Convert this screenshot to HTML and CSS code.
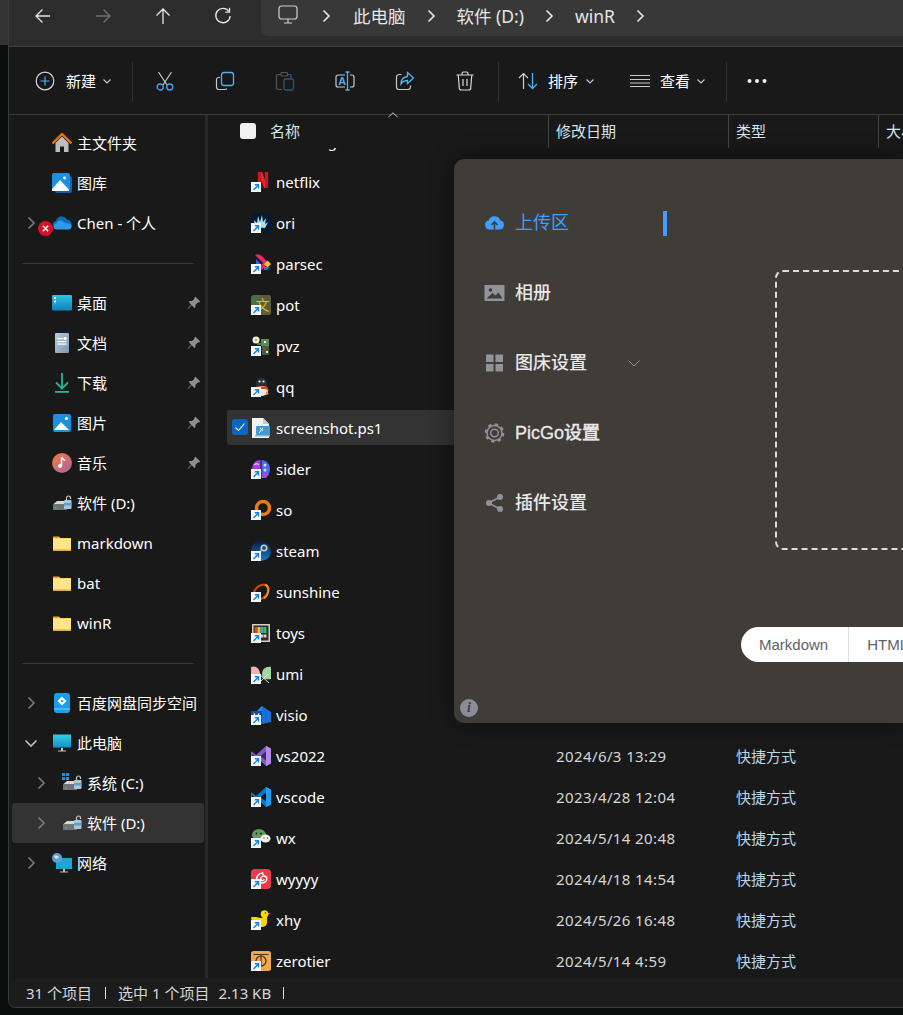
FILE: index.html
```html
<!DOCTYPE html>
<html lang="zh-CN">
<head>
<meta charset="utf-8">
<title>winR - 文件资源管理器</title>
<link rel="stylesheet" href="styles.css">
</head>
<body>
<svg class="defs" width="0" height="0" aria-hidden="true">
  <defs>
    <symbol id="chev" viewBox="0 0 16 16"><path d="M5.500 2.500 11 8l-5.500 5.500" fill="none" stroke="currentColor" stroke-width="1.600"/></symbol>
    <symbol id="chevd" viewBox="0 0 10 10"><path d="M1.500 3.500 5 7l3.500-3.500" fill="none" stroke="currentColor" stroke-width="1.200"/></symbol>
    <symbol id="pin" viewBox="0 0 14 14"><path d="M8.500.8 13.200 5.500 11.900 6.600 10.800 6.400 8.500 8.700 8.500 11 7.400 12 4.700 9.300 1.300 12.800.8 12.300 4.200 8.800 1.700 6.100 2.800 5 5.100 5 7.400 2.800 7.300 1.800Z" fill="#8b9096"/></symbol>
    <symbol id="sc" viewBox="0 0 10 10"><rect width="10" height="10" fill="#f4f6f8"/><path d="M2.500 8 7.200 3.200M3.800 2.800H7.500V6.500" fill="none" stroke="#1484e0" stroke-width="1.400"/></symbol>
    <symbol id="folder" viewBox="0 0 20 20"><path d="M1 3.500h6l2 2h-8z" fill="#f0a818"/><rect x="1" y="5" width="18" height="12.500" fill="#ffd75e"/><rect x="1" y="6" width="18" height="11.500" fill="#ffe48a"/><rect x="1" y="16.500" width="18" height="1" fill="#e8a820"/></symbol>
    <symbol id="drive" viewBox="0 0 20 20"><path d="M1 11.500 5 8h10v3.500z" fill="#d8d8d8"/><rect x="1" y="11.500" width="14" height="5.500" fill="#6f7276"/><rect x="3" y="14" width="1.500" height="1.500" fill="#34d058"/><path d="M14.500 8V5a2 2 0 0 1 4 0v1" fill="none" stroke="#c9ccd0" stroke-width="1.200"/><rect x="12" y="7" width="7.500" height="9" rx="1" fill="#b6c4d0"/><rect x="12" y="10" width="7.500" height="2.500" fill="#4aa3dc"/></symbol>
    <symbol id="mount" viewBox="0 0 20 20"><rect x="1" y="1" width="18" height="18" rx="2" fill="#1b8fe0"/><path d="M2 17 9 9l8 8z" fill="#fff"/><circle cx="14.500" cy="5.500" r="1.600" fill="#fff"/></symbol>
  </defs>
</svg>

<div class="gutter"><div class="gutter-top"></div></div>

<div class="window">
  <header class="navbar">
    <div class="nav-buttons">
      <svg class="nb" viewBox="0 0 20 20"><path d="M17 10H3M9.500 3.500 3 10l6.500 6.500" fill="none" stroke="#e8e8e8" stroke-width="1.300"/></svg>
      <svg class="nb" viewBox="0 0 20 20"><path d="M3 10h14M10.500 3.500 17 10l-6.500 6.500" fill="none" stroke="#6e6e6e" stroke-width="1.300"/></svg>
      <svg class="nb" viewBox="0 0 20 20"><path d="M10 18V3M3.500 9.500 10 3l6.500 6.500" fill="none" stroke="#e8e8e8" stroke-width="1.300"/></svg>
      <svg class="nb" viewBox="0 0 20 20"><path d="M16 5.500A7.200 7.200 0 1 0 17.200 10" fill="none" stroke="#e8e8e8" stroke-width="1.300"/><path d="M16.500 1.800v4.300h-4.300" fill="none" stroke="#e8e8e8" stroke-width="1.300"/></svg>
    </div>
    <nav class="crumbs">
      <svg class="crumb-pc" viewBox="0 0 20 20"><rect x="1" y="1" width="18" height="13" rx="2.500" fill="none" stroke="#cfcfcf" stroke-width="1.200"/><path d="M10 14v3.500M6 18h8" fill="none" stroke="#cfcfcf" stroke-width="1.200"/></svg>
      <svg class="crumb-sep" viewBox="0 0 16 16"><use href="#chev"/></svg>
      <span class="crumb">此电脑</span>
      <svg class="crumb-sep" viewBox="0 0 16 16"><use href="#chev"/></svg>
      <span class="crumb">软件 (D:)</span>
      <svg class="crumb-sep" viewBox="0 0 16 16"><use href="#chev"/></svg>
      <span class="crumb">winR</span>
      <svg class="crumb-sep" viewBox="0 0 16 16"><use href="#chev"/></svg>
    </nav>
  </header>

  <div class="toolbar">
    <div class="tb-new">
      <svg class="ti" viewBox="0 0 20 20"><circle cx="10" cy="10" r="8.800" fill="none" stroke="#d8d8d8" stroke-width="1.200"/><path d="M10 5.500v9M5.500 10h9" stroke="#4cb4f0" stroke-width="1.200"/></svg>
      <span class="tb-label">新建</span>
      <svg class="tb-chev" viewBox="0 0 10 10"><use href="#chevd"/></svg>
    </div>
    <span class="tb-sep"></span>
    <div class="tb-icons">
      <span class="tb-btn"><svg class="ti" viewBox="0 0 20 20"><path d="M3.500 1 12 14M16.500 1 8 14" fill="none" stroke="#cfcfcf" stroke-width="1.100"/><circle cx="5.200" cy="16" r="3" fill="none" stroke="#3fa9e0" stroke-width="1.300"/><circle cx="14.800" cy="16" r="3" fill="none" stroke="#3fa9e0" stroke-width="1.300"/></svg></span>
      <span class="tb-btn"><svg class="ti" viewBox="0 0 20 20"><path d="M5 6.500H3.500A2 2 0 0 0 1.500 8.500v7.500a2.500 2.500 0 0 0 2.500 2.500h6a2.500 2.500 0 0 0 2-1" fill="none" stroke="#c8c8c8" stroke-width="1.200"/><rect x="6.500" y="1.500" width="12" height="13" rx="2.500" fill="none" stroke="#4cb4f0" stroke-width="1.300"/></svg></span>
      <span class="tb-btn"><svg class="ti" viewBox="0 0 20 20"><path d="M5.500 3.500H3A1.500 1.500 0 0 0 1.500 5v12A1.500 1.500 0 0 0 3 18.500h4M13 3.500h1.500A1.500 1.500 0 0 1 16 5v2.500" fill="none" stroke="#555" stroke-width="1.200"/><rect x="6" y="1.500" width="6.500" height="3.500" rx="1" fill="none" stroke="#555" stroke-width="1.200"/><rect x="9" y="8" width="9.500" height="11" rx="1.800" fill="none" stroke="#275a78" stroke-width="1.300"/></svg></span>
      <span class="tb-btn"><svg class="ti" viewBox="0 0 20 20"><path d="M10 4H3A2 2 0 0 0 1 6v8a2 2 0 0 0 2 2h7M15 4h2a2 2 0 0 1 2 2v8a2 2 0 0 1-2 2h-2" fill="none" stroke="#c8c8c8" stroke-width="1.200"/><text class="ti-a" x="3.500" y="14">A</text><path d="M12.500 1v18M10.500 1h4M10.500 19h4" fill="none" stroke="#4cb4f0" stroke-width="1.300"/></svg></span>
      <span class="tb-btn"><svg class="ti" viewBox="0 0 20 20"><path d="M6.500 3.500H4A2.500 2.500 0 0 0 1.500 6v10A2.500 2.500 0 0 0 4 18.500h9a2.500 2.500 0 0 0 2.500-2.500v-1.500" fill="none" stroke="#c8c8c8" stroke-width="1.200"/><path d="M12.500 1.500 18.500 7l-6 5.500V9.500c-3 0-5 1-6.500 3.500 0-4.500 2.500-7 6.500-7.500z" fill="none" stroke="#4cb4f0" stroke-width="1.300"/></svg></span>
      <span class="tb-btn"><svg class="ti" viewBox="0 0 20 20"><path d="M1.500 4h17M7 4V2.500A1.500 1.500 0 0 1 8.500 1h3A1.500 1.500 0 0 1 13 2.500V4M3.200 4l1.100 13a2 2 0 0 0 2 2h7.400a2 2 0 0 0 2-2L16.800 4M8 8v7M12 8v7" fill="none" stroke="#d8d8d8" stroke-width="1.200"/></svg></span>
    </div>
    <span class="tb-sep tb-sep-b"></span>
    <div class="tb-sort">
      <svg class="ti" viewBox="0 0 20 20"><path d="M5.500 18V2.500M1 7l4.500-4.500L10 7" fill="none" stroke="#d0d0d0" stroke-width="1.200"/><path d="M14.500 2v15.500M10 13l4.500 4.500L19 13" fill="none" stroke="#4cb4f0" stroke-width="1.300"/></svg>
      <span class="tb-label">排序</span>
      <svg class="tb-chev" viewBox="0 0 10 10"><use href="#chevd"/></svg>
    </div>
    <div class="tb-view">
      <svg class="ti" viewBox="0 0 20 20"><path d="M0 4.500h20M0 8.500h20M0 12h20M0 15.500h20" fill="none" stroke="#c8c8c8" stroke-width="1.100"/></svg>
      <span class="tb-label">查看</span>
      <svg class="tb-chev" viewBox="0 0 10 10"><use href="#chevd"/></svg>
    </div>
    <span class="tb-sep tb-sep-c"></span>
    <svg class="tb-dots" viewBox="0 0 20 6"><circle cx="2.500" cy="3" r="2" fill="#f0f0f0"/><circle cx="10" cy="3" r="2" fill="#f0f0f0"/><circle cx="17.500" cy="3" r="2" fill="#f0f0f0"/></svg>
  </div>

  <div class="main">
    <aside class="sidebar">
      <div class="side-row"><svg class="icon" viewBox="0 0 20 20"><path d="M3.500 10v9h4.500v-5.500h4V19h4.500v-9L10 3.500z" fill="#bdbdbd"/><path d="M0.500 10.500 10 1l9.500 9.500" fill="none" stroke="#e8730c" stroke-width="2.400"/></svg><span>主文件夹</span></div>
      <div class="side-row"><svg class="icon" viewBox="0 0 20 20"><rect x="3" y="3" width="17" height="17" rx="2" fill="#0f62ad"/><rect width="18" height="18" rx="2" fill="#1b8fe0"/><path d="M0 16 8 7l9 9.500V18H0z" fill="#f4faff"/><circle cx="12.500" cy="5" r="1.400" fill="#fff"/></svg><span>图库</span></div>
      <div class="side-row has-chev">
        <svg class="chev" viewBox="0 0 16 16"><use href="#chev"/></svg>
        <svg class="icon" viewBox="0 0 20 20"><path d="M4.500 15.500A3.800 3.800 0 0 1 4 8a5.800 5.800 0 0 1 10.800-1.500A4.700 4.700 0 0 1 19.500 11.500l-.5 4z" fill="#0f6cbd"/><path d="M5 16.500a3 3 0 0 1-.5-6 4 4 0 0 1 7-1.500l4 1.500a3 3 0 0 1 4 2.500 3 3 0 0 1-2.500 3.500z" fill="#2a9be8"/></svg>
        <span>Chen - 个人</span>
        <span class="err-badge"><svg viewBox="0 0 14 14"><circle cx="7" cy="7" r="7" fill="#d8102c"/><path d="M4.500 4.500l5 5M9.500 4.500l-5 5" stroke="#fff" stroke-width="1.400"/></svg></span>
      </div>
      <div class="side-div"></div>
      <div class="side-row"><svg class="icon" viewBox="0 0 20 20"><defs><linearGradient id="gd" x1="0" y1="0" x2="0" y2="1"><stop offset="0" stop-color="#2cc3e6"/><stop offset="1" stop-color="#1280b8"/></linearGradient></defs><rect y="2" width="20" height="15.500" rx="1" fill="url(#gd)"/><rect x="2" y="4" width="2" height="2" fill="#fff"/><rect x="2" y="7.500" width="2" height="2" fill="#fff"/></svg><span>桌面</span><svg class="pin" viewBox="0 0 14 14"><use href="#pin"/></svg></div>
      <div class="side-row"><svg class="icon" viewBox="0 0 20 20"><defs><linearGradient id="gdoc" x1="0" y1="0" x2="1" y2="1"><stop offset="0" stop-color="#b9cde0"/><stop offset="1" stop-color="#7c95b0"/></linearGradient></defs><rect x="3" width="14" height="20" rx="1" fill="url(#gdoc)"/><rect x="5.500" y="5" width="6" height="1.200" fill="#fff"/><rect x="5.500" y="8" width="9" height="1.200" fill="#fff"/><rect x="5.500" y="10.500" width="9" height="1.200" fill="#fff"/><rect x="12" y="4" width="2.500" height="3" fill="#fff"/></svg><span>文档</span><svg class="pin" viewBox="0 0 14 14"><use href="#pin"/></svg></div>
      <div class="side-row"><svg class="icon" viewBox="0 0 20 20"><path d="M10 0v15M4 9.500l6 6 6-6" fill="none" stroke="#1fb89a" stroke-width="1.800"/><rect x="3" y="18" width="14" height="1.800" fill="#1fb89a"/></svg><span>下载</span><svg class="pin" viewBox="0 0 14 14"><use href="#pin"/></svg></div>
      <div class="side-row"><svg class="icon" viewBox="0 0 20 20"><use href="#mount"/></svg><span>图片</span><svg class="pin" viewBox="0 0 14 14"><use href="#pin"/></svg></div>
      <div class="side-row"><svg class="icon" viewBox="0 0 20 20"><defs><linearGradient id="gm" x1="0" y1="0" x2="1" y2="1"><stop offset="0" stop-color="#ee7d3c"/><stop offset="1" stop-color="#b35fa8"/></linearGradient></defs><circle cx="10" cy="10" r="10" fill="url(#gm)"/><path d="M9.500 4.500v8" stroke="#fff" stroke-width="1.500"/><path d="M9.500 4.500c1 1.500 3 1.500 3 3.500" fill="none" stroke="#fff" stroke-width="1.500"/><circle cx="8" cy="13" r="2" fill="#fff"/></svg><span>音乐</span><svg class="pin" viewBox="0 0 14 14"><use href="#pin"/></svg></div>
      <div class="side-row"><svg class="icon" viewBox="0 0 20 20"><use href="#drive"/></svg><span>软件 (D:)</span></div>
      <div class="side-row"><svg class="icon" viewBox="0 0 20 20"><use href="#folder"/></svg><span>markdown</span></div>
      <div class="side-row"><svg class="icon" viewBox="0 0 20 20"><use href="#folder"/></svg><span>bat</span></div>
      <div class="side-row"><svg class="icon" viewBox="0 0 20 20"><use href="#folder"/></svg><span>winR</span></div>
      <div class="side-div"></div>
      <div class="side-row has-chev"><svg class="chev" viewBox="0 0 16 16"><use href="#chev"/></svg><svg class="icon" viewBox="0 0 20 20"><rect x="2" width="16" height="20" rx="3" fill="#1a9ee8"/><rect x="2" y="15.500" width="16" height="1" fill="#7fd0f8"/><path d="M10 3.500 14.500 8 10 12.500 5.500 8z" fill="#fff"/><path d="M10 6.500 11.500 8 10 9.500 8.500 8z" fill="#1a9ee8"/></svg><span>百度网盘同步空间</span></div>
      <div class="side-row has-chev"><svg class="chev chev-open" viewBox="0 0 16 16"><path d="M2.500 5.500 8 11l5.500-5.500" fill="none" stroke="currentColor" stroke-width="1.700"/></svg><svg class="icon" viewBox="0 0 20 20"><defs><linearGradient id="gpc" x1="0" y1="0" x2="0" y2="1"><stop offset="0" stop-color="#2fd0e6"/><stop offset="1" stop-color="#1590c4"/></linearGradient></defs><rect y="1.500" width="18" height="13" fill="url(#gpc)" transform="translate(1 0)"/><rect x="1" y="14" width="18" height="1" fill="#0e5a80"/><path d="M9 15h2v2.500H9zM6 17.500h8v1H6z" fill="#c0c8d0"/></svg><span>此电脑</span></div>
      <div class="side-row has-chev deep"><svg class="chev" viewBox="0 0 16 16"><use href="#chev"/></svg><svg class="icon" viewBox="0 0 20 20"><use href="#drive"/><path d="M0 0h3v3H0zM4 0h3v3H4zM0 4h3v3H0zM4 4h3v3H4z" fill="#1b8fe0"/></svg><span>系统 (C:)</span></div>
      <div class="side-row has-chev deep selected"><svg class="chev" viewBox="0 0 16 16"><use href="#chev"/></svg><svg class="icon" viewBox="0 0 20 20"><use href="#drive"/></svg><span>软件 (D:)</span></div>
      <div class="side-row has-chev"><svg class="chev" viewBox="0 0 16 16"><use href="#chev"/></svg><svg class="icon" viewBox="0 0 20 20"><rect x="4" y="5" width="16" height="11" fill="#1ca6d8"/><path d="M11 16h2v2.500h-2zM8 18.500h8v1H8z" fill="#b8c0c8"/><circle cx="5" cy="5" r="5" fill="#5d9fd0"/><path d="M2 3c2-1 4 0 5 1-1 2-3 2-4 1z" fill="#cfe6f5"/></svg><span>网络</span></div>
    </aside>
    <div class="side-rule"></div>

    <section class="content">
      <div class="col-head">
        <span class="head-check"></span>
        <span class="head-name">名称<svg class="sort-caret" viewBox="0 0 10 6"><path d="M.5 5 5 .8 9.500 5" fill="none" stroke="#c8c8c8" stroke-width="1"/></svg></span>
        <span class="head-col head-date">修改日期</span>
        <span class="head-col head-type">类型</span>
        <span class="head-col head-size">大小</span>
      </div>
      <div class="list-clip">
        <div class="list">
          <div class="row"><span class="fi"><svg viewBox="0 0 20 20"><path d="M1 0h15l3 1.500H1z" fill="#f0f0f0"/></svg></span><span class="name">morning</span><span class="date">2024/5/14 20:48</span></div>
          <div class="row"><span class="fi"><svg viewBox="0 0 20 20"><rect x="6" width="12" height="16" fill="#2a2020"/><path d="M7 0h4l6 16h-4z" fill="#e8262c"/><path d="M7 0h3v15H7zM14 0h3v16h-3z" fill="#c81820"/></svg><svg class="sc" viewBox="0 0 10 10"><use href="#sc"/></svg></span><span class="name">netflix</span><span class="date">2024/5/14 20:48</span><span class="type">快捷方式</span></div>
          <div class="row"><span class="fi"><svg viewBox="0 0 20 20"><rect width="20" height="20" fill="#07192e"/><path d="M4 14 3 7l3 3 1-7 2 6 2-7 1 7 3-4-1 6 3-2-3 6z" fill="#a8e0f4"/></svg><svg class="sc" viewBox="0 0 10 10"><use href="#sc"/></svg></span><span class="name">ori</span><span class="date">2024/5/14 20:48</span><span class="type">快捷方式</span></div>
          <div class="row"><span class="fi"><svg viewBox="0 0 20 20"><path d="M4 1C7-1 10 1 12 3l5 6-6 7-3-3 4-4-6-6z" fill="#e9246c"/><path d="M5 5l5 5-5 5z" fill="#1e6ae0"/><path d="M13 10 16.500 6.500 20 10l-3.500 3.500z" fill="#f5c518"/><path d="M13 13h6l-3 3h-3z" fill="#2a70d8"/></svg><svg class="sc" viewBox="0 0 10 10"><use href="#sc"/></svg></span><span class="name">parsec</span><span class="date">2024/5/14 20:48</span><span class="type">快捷方式</span></div>
          <div class="row"><span class="fi"><svg viewBox="0 0 20 20"><rect width="20" height="20" rx="3" fill="#4f6a4a"/><path d="M9 0h8a3 3 0 0 1 3 3v14a3 3 0 0 1-3 3H9z" fill="#5e5c36"/><text class="pot-glyph" x="4.500" y="15">文</text></svg><svg class="sc" viewBox="0 0 10 10"><use href="#sc"/></svg></span><span class="name">pot</span><span class="date">2024/5/14 20:48</span><span class="type">快捷方式</span></div>
          <div class="row"><span class="fi"><svg viewBox="0 0 20 20"><circle cx="5" cy="4" r="3.500" fill="#f4f4e8"/><circle cx="5" cy="4" r="1.300" fill="#d8a820"/><rect x="10" y="3" width="8" height="7" fill="#5c8a5c"/><rect x="11" y="10" width="7" height="9" fill="#3e5e40"/><rect x="13" y="5" width="2" height="2" fill="#e8e8e8"/><rect x="12" y="12" width="2" height="2" fill="#c83030"/><rect x="15" y="15" width="2" height="2" fill="#e8e8e8"/><rect x="6" y="7" width="5" height="2" fill="#3a8a3a"/></svg><svg class="sc" viewBox="0 0 10 10"><use href="#sc"/></svg></span><span class="name">pvz</span><span class="date">2024/5/14 20:48</span><span class="type">快捷方式</span></div>
          <div class="row"><span class="fi"><svg viewBox="0 0 20 20"><ellipse cx="10.500" cy="7" rx="5.500" ry="6.500" fill="#2a3038"/><ellipse cx="11" cy="14" rx="6" ry="5" fill="#e8e8e8"/><path d="M5 9.500h11l2 4-4-1.500H6z" fill="#e8401c"/><path d="M15 14l3 3-3 1z" fill="#e8a018"/><circle cx="8.500" cy="4.500" r="1.100" fill="#eee"/><circle cx="12.500" cy="4.500" r="1.100" fill="#eee"/></svg><svg class="sc" viewBox="0 0 10 10"><use href="#sc"/></svg></span><span class="name">qq</span><span class="date">2024/5/14 20:48</span><span class="type">快捷方式</span></div>
          <div class="row is-selected"><span class="row-check"><svg viewBox="0 0 16 16"><path d="M3.500 8.500 6.500 11.500 12.500 4.500" fill="none" stroke="#fff" stroke-width="1.100"/></svg></span><span class="fi"><svg viewBox="0 0 20 20"><path d="M1 0h11l6 6v14H1z" fill="#f2f2f2"/><path d="M12 0v6h6z" fill="#c8c8c8"/><rect x="5" y="8" width="14" height="9" rx="1" fill="#3e9ad2"/><path d="M8 15 12 10M9 10l3 2.500" stroke="#fff" stroke-width="1"/><rect x="4" y="17" width="15" height="1.500" fill="#9ab4c8"/></svg></span><span class="name">screenshot.ps1</span><span class="date">2024/5/14 20:48</span><span class="type">PS1 文件</span></div>
          <div class="row"><span class="fi"><svg viewBox="0 0 20 20"><path d="M9.500 1C4 1 1 5 1 10s3 9 8.500 9z" fill="#a83ce0"/><path d="M10.500 1c5 0 8.500 4 8.500 9s-3 9-8.500 9z" fill="#4a6ae8"/><circle cx="14" cy="6" r="1.500" fill="#d8e0ff"/><circle cx="14" cy="11" r="1.500" fill="#d8e0ff"/><path d="M3 6c2-2 4-1 5 0" stroke="#e8a8ff" stroke-width="1.200" fill="none"/><path d="M13 15h5l-3 4h-4z" fill="#c83cc8"/></svg><svg class="sc" viewBox="0 0 10 10"><use href="#sc"/></svg></span><span class="name">sider</span><span class="date">2024/5/14 20:48</span><span class="type">快捷方式</span></div>
          <div class="row"><span class="fi"><svg viewBox="0 0 20 20"><circle cx="12" cy="8" r="6.500" fill="none" stroke="#ee7a10" stroke-width="3.400"/></svg><svg class="sc" viewBox="0 0 10 10"><use href="#sc"/></svg></span><span class="name">so</span><span class="date">2024/5/14 20:48</span><span class="type">快捷方式</span></div>
          <div class="row"><span class="fi"><svg viewBox="0 0 20 20"><defs><linearGradient id="gs" x1="0" y1="0" x2="0" y2="1"><stop offset="0" stop-color="#0c1a44"/><stop offset="1" stop-color="#1480c0"/></linearGradient></defs><circle cx="10" cy="10" r="10" fill="url(#gs)"/><circle cx="13" cy="7" r="3.500" fill="#c8d4e0"/><circle cx="13" cy="7" r="2" fill="#264a78"/><path d="M10 10 4 14" stroke="#e8eef4" stroke-width="2"/></svg><svg class="sc" viewBox="0 0 10 10"><use href="#sc"/></svg></span><span class="name">steam</span><span class="date">2024/5/14 20:48</span><span class="type">快捷方式</span></div>
          <div class="row"><span class="fi"><svg viewBox="0 0 20 20"><ellipse cx="10" cy="10" rx="8.500" ry="6" transform="rotate(-45 10 10)" fill="none" stroke="#c84808" stroke-width="2.200"/><path d="M14 2.500c5 2 4 10-1 14" fill="none" stroke="#f09018" stroke-width="2"/></svg><svg class="sc" viewBox="0 0 10 10"><use href="#sc"/></svg></span><span class="name">sunshine</span><span class="date">2024/5/14 20:48</span><span class="type">快捷方式</span></div>
          <div class="row"><span class="fi"><svg viewBox="0 0 20 20"><rect x="1" y="1" width="18" height="18" fill="#d8d0b8"/><rect x="2.500" y="2.500" width="15" height="15" fill="#26303a"/><rect x="3.500" y="4" width="3" height="6" fill="#e84020"/><rect x="6.500" y="4" width="3" height="6" fill="#f0c020"/><rect x="9.500" y="4" width="3" height="6" fill="#30a8e0"/><rect x="12.500" y="4" width="3" height="6" fill="#40c040"/><rect x="10" y="11.500" width="2.500" height="3" fill="#d8d0b8"/><rect x="13" y="11.500" width="2.500" height="3" fill="#d8d0b8"/></svg><svg class="sc" viewBox="0 0 10 10"><use href="#sc"/></svg></span><span class="name">toys</span><span class="date">2024/5/14 20:48</span><span class="type">快捷方式</span></div>
          <div class="row"><span class="fi"><svg viewBox="0 0 20 20"><path d="M0 3c5-2 9 2 9 7s-3 7-9 6z" fill="#f0b0b0"/><path d="M20 3c-5-1-9 2-9 7s4 6 9 5z" fill="#a8d0a8"/><path d="M8 10l10 9M17 10 8 19" stroke="#e8e8e8" stroke-width="1"/></svg><svg class="sc" viewBox="0 0 10 10"><use href="#sc"/></svg></span><span class="name">umi</span><span class="date">2024/5/14 20:48</span><span class="type">快捷方式</span></div>
          <div class="row"><span class="fi"><svg viewBox="0 0 20 20"><path d="M11 1 20 7v10l-9 2z" fill="#1a6ed8"/><path d="M11 1 6 6v10l5 3z" fill="#2a8ee8"/><rect y="6" width="11" height="11" fill="#1450a8"/><path d="M3 8.500 5.500 14 8 8.500" fill="none" stroke="#fff" stroke-width="1.300"/></svg><svg class="sc" viewBox="0 0 10 10"><use href="#sc"/></svg></span><span class="name">visio</span><span class="date">2024/5/14 20:48</span><span class="type">快捷方式</span></div>
          <div class="row"><span class="fi"><svg viewBox="0 0 20 20"><path d="M15 0 20 2.500v15L15 20 5 11 1 14.500 0 14V6l1-.5L5 9z" fill="#7c5cc0"/><path d="M15 0 20 2.500v15L15 20z" fill="#b48ce8"/><path d="M15 5.500 9.500 10l5.500 4.500z" fill="#3a2a5c"/><path d="M1 8v4l2-2z" fill="#3a2a5c"/></svg><svg class="sc" viewBox="0 0 10 10"><use href="#sc"/></svg></span><span class="name">vs2022</span><span class="date">2024/6/3 13:29</span><span class="type">快捷方式</span></div>
          <div class="row"><span class="fi"><svg viewBox="0 0 20 20"><path d="M15 0 20 2.500v15L15 20 5 11 1 14.500 0 14V6l1-.5L5 9z" fill="#0a78c8"/><path d="M15 0 20 2.500v15L15 20z" fill="#1fa0ee"/><path d="M15 5.500 9.500 10l5.500 4.500z" fill="#141414"/><path d="M1 8v4l2-2z" fill="#141414"/></svg><svg class="sc" viewBox="0 0 10 10"><use href="#sc"/></svg></span><span class="name">vscode</span><span class="date">2023/4/28 12:04</span><span class="type">快捷方式</span></div>
          <div class="row"><span class="fi"><svg viewBox="0 0 20 20"><ellipse cx="8" cy="7" rx="7" ry="6" fill="#5f9a5f"/><ellipse cx="14.500" cy="10.500" rx="5" ry="4" fill="#f0f0e8"/><circle cx="5.500" cy="5.500" r=".9" fill="#1a1a1a"/><circle cx="10" cy="5.500" r=".9" fill="#1a1a1a"/><circle cx="13" cy="10" r=".7" fill="#555"/><circle cx="16.500" cy="10" r=".7" fill="#555"/></svg><svg class="sc" viewBox="0 0 10 10"><use href="#sc"/></svg></span><span class="name">wx</span><span class="date">2024/5/14 20:48</span><span class="type">快捷方式</span></div>
          <div class="row"><span class="fi"><svg viewBox="0 0 20 20"><rect width="20" height="20" rx="4" fill="#ec3a4a"/><path d="M12 4c-5 0-7 4-6 7s5 4 8 2 2-6-1-6-4 3-3 4 3 1 3-1M11 3l1.500 3" fill="none" stroke="#fff" stroke-width="1.500"/></svg><svg class="sc" viewBox="0 0 10 10"><use href="#sc"/></svg></span><span class="name">wyyyy</span><span class="date">2024/4/18 14:54</span><span class="type">快捷方式</span></div>
          <div class="row"><span class="fi"><svg viewBox="0 0 20 20"><circle cx="13.500" cy="4" r="3.800" fill="#f5d800"/><path d="M0 7h5l5 1 6-2v6c0 3-2 5-6 5H5C2 17 1 12 0 7z" fill="#f5d800"/><path d="M17 3h3l-3 2z" fill="#e88010"/><circle cx="14.500" cy="3" r=".7" fill="#222"/></svg><svg class="sc" viewBox="0 0 10 10"><use href="#sc"/></svg></span><span class="name">xhy</span><span class="date">2024/5/26 16:48</span><span class="type">快捷方式</span></div>
          <div class="row"><span class="fi"><svg viewBox="0 0 20 20"><rect width="20" height="20" rx="2.500" fill="#f0a850"/><path d="M2.500 3.500h15M10 3.500v12" stroke="#4a3018" stroke-width="1.200"/><circle cx="10" cy="10" r="5" fill="none" stroke="#4a3018" stroke-width="1.200"/></svg><svg class="sc" viewBox="0 0 10 10"><use href="#sc"/></svg></span><span class="name">zerotier</span><span class="date">2024/5/14 4:59</span><span class="type">快捷方式</span></div>
        </div>
      </div>
    </section>
  </div>

  <footer class="status">
    <span>31 个项目</span><span class="st-bar"></span><span>选中 1 个项目</span><span class="st-size">2.13 KB</span><span class="st-bar st-bar-end"></span>
  </footer>
</div>

<div class="picgo">
  <div class="pg-menu">
    <div class="pg-item active"><svg class="pg-icon" viewBox="0 0 20 20"><path d="M5 16.500a4.500 4.500 0 0 1-.8-8.900 6 6 0 0 1 11.600 0 4.500 4.500 0 0 1-.8 8.900z" fill="#409eff"/><path d="M10 16.500V10M7 12l3-3.200 3 3.200" fill="none" stroke="#403c38" stroke-width="1.600"/></svg><span>上传区</span></div>
    <div class="pg-item"><svg class="pg-icon" viewBox="0 0 20 20"><rect y="2" width="20" height="16" fill="#909399"/><circle cx="6" cy="7" r="1.800" fill="#403c38"/><path d="M2 15.500 8 10l3 2.500L14 9.500l4 6z" fill="#403c38"/></svg><span>相册</span></div>
    <div class="pg-item"><svg class="pg-icon" viewBox="0 0 20 20"><path d="M1.500 1.500h7.500v7.500H1.500zM11 1.500h7.500v7.500H11zM1.500 11h7.500v7.500H1.500zM11 11h7.500v7.500H11z" fill="#909399"/></svg><span>图床设置</span><svg class="pg-chev" viewBox="0 0 12 7"><path d="M.5.500 6 6 11.500.5" fill="none" stroke="#909399" stroke-width="1"/></svg></div>
    <div class="pg-item strong"><svg class="pg-icon" viewBox="0 0 20 20"><circle cx="10" cy="10" r="3.800" fill="none" stroke="#909399" stroke-width="1.500"/><circle cx="10" cy="10" r="7.500" fill="none" stroke="#909399" stroke-width="1.500"/><circle cx="10" cy="10" r="8.800" fill="none" stroke="#909399" stroke-width="2" stroke-dasharray="3.400 3.510"/></svg><span>PicGo设置</span></div>
    <div class="pg-item"><svg class="pg-icon" viewBox="0 0 20 20"><path d="M4 10 15.500 4M4 10l11.500 6" stroke="#909399" stroke-width="1.500"/><circle cx="4.500" cy="10" r="3" fill="#909399"/><circle cx="15.500" cy="4" r="3" fill="#909399"/><circle cx="15.500" cy="16" r="3" fill="#909399"/></svg><span>插件设置</span></div>
    <span class="pg-info">i</span>
  </div>
  <div class="pg-main">
    <div class="dropzone"></div>
    <div class="pill">
      <span class="pill-btn">Markdown</span>
      <span class="pill-btn">HTML</span>
      <span class="pill-btn">URL</span>
    </div>
  </div>
</div>
</body>
</html>
```

FILE: styles.css
```css
* { box-sizing: border-box; }
html, body { margin: 0; padding: 0; }
body {
  width: 903px;
  height: 1015px;
  overflow: hidden;
  display: flex;
  align-items: flex-start;
  background: #0c0e0d;
  color: #fff;
  font: 15px/20px "Noto Sans", "Noto Sans CJK SC", sans-serif;
  position: relative;
}
.defs { position: absolute; }
.gutter { width: 8px; flex: none; height: 1015px; }
.gutter-top { height: 45px; background: #333; }

.window {
  width: 895px;
  height: 1008px;
  flex: none;
  display: flex;
  flex-direction: column;
  border-left: 1px solid #3a3a3a;
  border-bottom: 1px solid #3a3a3a;
  border-bottom-left-radius: 8px;
  background: #191919;
  overflow: hidden;
}

/* address bar */
.navbar {
  height: 47px;
  flex: none;
  display: flex;
  align-items: flex-start;
  background: #2d2d2d;
  border-bottom: 1px solid #3d3d3d;
}
.nav-buttons { width: 252px; height: 32px; flex: none; display: flex; align-items: center; padding-left: 24px; gap: 40px; }
.nb { width: 20px; height: 20px; flex: none; }
.crumbs {
  flex: 1;
  height: 36px;
  display: flex;
  align-items: center;
  padding: 0 0 4px 17px;
  background: #383838;
  border-bottom-left-radius: 7px;
  color: #e6e6e6;
  font-size: 17.500px;
}
.crumb-pc { width: 20px; height: 20px; flex: none; margin-top: -2px; }
.crumb-sep { width: 16px; height: 16px; flex: none; margin: 0 18px 0 17px; color: #e8e8e8; }
.crumb { flex: none; }
.crumb-pc + .crumb-sep { margin-left: 20px; margin-right: 19px; }

/* command bar */
.toolbar {
  height: 68px;
  flex: none;
  display: flex;
  align-items: center;
  background: #191919;
  border-bottom: 1px solid #3a3a3a;
  padding-top: 1px;
}
.ti { width: 20px; height: 20px; flex: none; }
.ti-a { font: 600 11px "Noto Sans", sans-serif; fill: #4cb4f0; }
.tb-new { display: flex; align-items: center; padding-left: 26px; width: 123px; flex: none; }
.tb-label { margin-left: 10px; }
.tb-new .tb-label { margin-left: 11px; }
.tb-chev { width: 10px; height: 10px; margin-left: 6px; color: #c8c8c8; flex: none; }
.tb-sep { width: 1px; height: 39px; background: #333; flex: none; }
.tb-icons { display: flex; padding-left: 2px; flex: none; }
.tb-btn { width: 60px; display: flex; justify-content: center; flex: none; }
.tb-sep-b { margin-left: 3px; }
.tb-sort { display: flex; align-items: center; margin-left: 19px; flex: none; }
.tb-sort .tb-chev { margin-left: 7px; }
.tb-view { display: flex; align-items: center; margin-left: 35px; flex: none; }
.tb-sep-c { margin-left: 20px; }
.tb-dots { width: 20px; height: 6px; margin-left: 20px; flex: none; }

/* main split */
.main { flex: 1; min-height: 0; display: flex; }
.sidebar { width: 196px; flex: none; padding: 8px 1px 0 3px; background: #191919; box-shadow: inset 3px 0 0 #1c1c1c; }
.side-rule { width: 3px; flex: none; background: #2a2a2a; }
.side-row {
  height: 40px;
  display: flex;
  align-items: center;
  padding-left: 40px;
  position: relative;
  color: #fff;
  white-space: nowrap;
}
.side-row .icon { width: 20px; height: 20px; flex: none; margin-right: 5px; }
.side-row.has-chev { padding-left: 11px; }
.side-row.deep { padding-left: 21px; }
.side-row.selected { background: #333; border-radius: 3px; }
.chev { width: 16px; height: 16px; flex: none; margin-right: 13px; color: #7d7d7d; }
.chev-open { color: #bdbdbd; }
.pin { width: 14px; height: 14px; margin-left: auto; margin-right: 3px; flex: none; }
.err-badge { position: absolute; left: 26px; top: 18px; width: 15px; height: 15px; display: block; }
.err-badge svg { display: block; width: 15px; height: 15px; }
.side-div { height: 40px; display: flex; align-items: center; padding: 0 10px; }
.side-div::before { content: ""; display: block; width: 172px; height: 1px; background: #383838; }

/* file list */
.content { flex: 1; min-width: 0; display: flex; flex-direction: column; position: relative; }
.col-head { height: 33px; flex: none; display: flex; align-items: center; color: #d8e4ec; padding-bottom: 2px; }
.head-check { width: 16px; height: 16px; margin-left: 32px; background: #f2f2f2; border-radius: 3px; flex: none; }
.head-name { width: 292px; padding-left: 14px; flex: none; position: relative; }
.sort-caret { position: absolute; left: 132px; top: -9px; width: 10px; height: 6px; }
.head-col { height: 33px; margin-bottom: -2px; display: flex; align-items: center; padding: 0 0 2px 7px; border-left: 1px solid #454545; flex: none; }
.head-date { width: 180px; }
.head-type { width: 150px; }
.head-size { width: 60px; }
.list-clip { flex: 1; min-height: 0; overflow: hidden; }
.list { margin-top: -25px; padding-left: 19px; display: flex; flex-direction: column; gap: 6px; }
.row {
  height: 35px;
  flex: none;
  display: flex;
  align-items: center;
  padding-left: 24px;
  border-radius: 3px;
  white-space: nowrap;
}
.is-selected { background: #333; position: relative; }
.row-check { position: absolute; left: 5px; top: 9px; width: 16px; height: 16px; background: #0a66c2; border-radius: 3px; display: block; }
.row-check svg { display: block; width: 16px; height: 16px; }
.fi { width: 20px; height: 20px; flex: none; position: relative; display: block; }
.fi > svg { display: block; width: 20px; height: 20px; }
.fi > svg.sc { position: absolute; left: 0; bottom: 0; width: 10px; height: 10px; }
.pot-glyph { font: 14px "Noto Sans CJK SC", sans-serif; fill: #e2b52c; }
.name { width: 280px; margin-left: 5px; flex: none; padding-top: 1px; }
.date { width: 180px; flex: none; color: #d6d6d6; letter-spacing: .4px; }
.type { flex: none; color: #b8d8ea; }

/* status bar */
.status {
  height: 29px;
  flex: none;
  display: flex;
  align-items: center;
  padding-left: 17px;
  background: #1c1c1c;
  color: #d8d8d8;
}
.st-bar { width: 1px; height: 12px; background: #e0e0e0; margin: 0 12px 0 13px; flex: none; }
.st-size { margin-left: 9px; }
.st-bar-end { margin-left: 12px; }

/* floating PicGo window */
.picgo {
  position: absolute;
  left: 454px;
  top: 159px;
  width: 449px;
  height: 564px;
  display: flex;
  overflow: hidden;
  background: #403c38;
  border-radius: 10px 0 0 10px;
  box-shadow: 0 0 24px rgba(0, 0, 0, .45);
  font-family: "Liberation Sans", "Noto Sans CJK SC", sans-serif;
}
.pg-menu { width: 287px; flex: none; display: flex; flex-direction: column; padding: 29px 0 6px 0; }
.pg-item {
  width: 213px;
  height: 70px;
  flex: none;
  display: flex;
  align-items: center;
  padding-left: 30px;
  color: #e8e8e8;
  font-size: 18px;
  font-weight: 500;
}
.pg-item.strong { -webkit-text-stroke: .3px #e8e8e8; }
.pg-icon { width: 21px; height: 20px; flex: none; margin-right: 10px; }
.pg-item.active { color: #409eff; font-weight: 400; }
.pg-item.active::after { content: ""; width: 4px; height: 25px; margin-left: auto; background: #409eff; }
.pg-chev { width: 12px; height: 7px; margin-left: 41px; flex: none; }
.pg-info {
  margin: auto 0 0 6px;
  width: 18px;
  height: 18px;
  border-radius: 50%;
  background: #8a8d99;
  color: #403c38;
  font: italic 700 14px/18px "Liberation Serif", serif;
  text-align: center;
}
.pg-main { flex: 1; min-width: 0; display: flex; flex-direction: column; align-items: flex-start; }
.dropzone {
  width: 300px;
  height: 280px;
  flex: none;
  margin: 111px 0 0 34px;
  border: 2px dashed #dcdcdc;
  border-radius: 8px;
}
.pill {
  margin-top: 77px;
  height: 35px;
  width: 300px;
  flex: none;
  display: flex;
  align-items: center;
  background: #fff;
  border-radius: 18px 0 0 18px;
  color: #606266;
  font-size: 15px;
}
.pill-btn { height: 35px; line-height: 35px; padding: 0 20px 0 18px; border-left: 1px solid #dcdfe6; flex: none; }
.pill-btn:first-child { border-left: 0; }
```
